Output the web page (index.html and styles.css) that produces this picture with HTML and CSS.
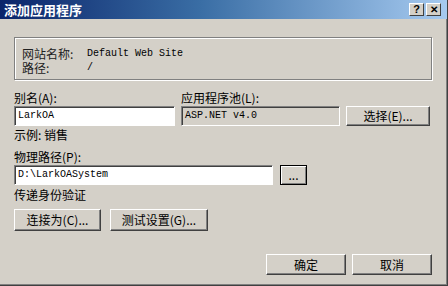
FILE: index.html
```html
<!DOCTYPE html>
<html lang="zh-CN">
<head>
    <meta charset="UTF-8">
    <title>添加应用程序</title>
    <link rel="stylesheet" href="styles.css">
</head>
<body>
    <section class="window">
        <div class="titlebar">
            <span class="title">添加应用程序</span>
            <div class="caption-buttons">
                <span class="cap-btn">?</span>
                <span class="cap-btn close">✕</span>
            </div>
        </div>

        <div class="content">
            <div class="group">
                <div class="info-row"><span class="info-label">网站名称:</span><span class="mono">Default Web Site</span></div>
                <div class="info-row"><span class="info-label">路径:</span><span class="mono">/</span></div>
            </div>

            <div class="row-grid">
                <label class="label">别名(A):</label>
                <label class="label">应用程序池(L):</label>
                <span></span>
                <div class="field mono">LarkOA</div>
                <div class="field readonly mono">ASP.NET v4.0</div>
                <button class="btn">选择(E)...</button>
            </div>

            <div class="label hint">示例: 销售</div>

            <label class="label">物理路径(P):</label>
            <div class="path-row">
                <div class="field path mono">D:\LarkOASystem</div>
                <button class="btn browse">...</button>
            </div>

            <div class="label">传递身份验证</div>

            <div class="btn-row">
                <button class="btn wide">连接为(C)...</button>
                <button class="btn wider">测试设置(G)...</button>
            </div>

            <div class="footer">
                <button class="btn ok">确定</button>
                <button class="btn ok">取消</button>
            </div>
        </div>
    </section>
</body>
</html>
```

FILE: styles.css
```css
*{
    box-sizing: border-box;
}

body{
    margin: 0;
    background-color: #d4d0c8;
    font-family: "Noto Sans CJK SC", "Liberation Sans", sans-serif;
    font-size: 12px;
    color: #000;
}

.window{
    width: 448px;
    height: 286px;
    background-color: #d4d0c8;
    border-right: 1px solid #404040;
    border-bottom: 1px solid #404040;
    box-shadow: inset -1px -1px 0 #808080;
}

.titlebar{
    height: 19px;
    display: flex;
    align-items: center;
    justify-content: space-between;
    padding: 0 6px 0 4px;
    background: linear-gradient(to right, #0a246a, #3a6ea5 45%, #a6caf0);
}

.title{
    color: #fff;
    font-weight: bold;
    font-size: 13px;
    line-height: 19px;
}

.caption-buttons{
    display: flex;
    gap: 2px;
}

.cap-btn{
    width: 15px;
    height: 13px;
    display: flex;
    align-items: center;
    justify-content: center;
    background-color: #d4d0c8;
    border: 1px solid;
    border-color: #fff #404040 #404040 #fff;
    font-family: "Liberation Sans", sans-serif;
    font-weight: bold;
    font-size: 11px;
    line-height: 1;
}

.close{
    font-size: 10px;
}

.content{
    padding: 18px 15px 0 14px;
}

.group{
    height: 43px;
    border: 1px solid #808080;
    box-shadow: inset 1px 1px 0 #fff, 1px 1px 0 #fff;
    padding: 9px 0 0 7px;
}

.info-row{
    display: flex;
    align-items: center;
    height: 14px;
    white-space: nowrap;
}

.info-row span{
    line-height: 14px;
}

.info-label{
    width: 65px;
    flex-shrink: 0;
    color: #222;
}

.mono{
    font-family: "Liberation Mono", monospace;
    font-size: 10px;
}

.label{
    display: block;
    height: 14px;
    line-height: 14px;
}

.row-grid{
    display: grid;
    grid-template-columns: 161px 159px 84px;
    column-gap: 6px;
    row-gap: 1px;
    margin-top: 11px;
}

.field{
    height: 20px;
    line-height: 18px;
    padding-left: 3px;
    background-color: #fff;
    border: 1px solid;
    border-color: #808080 #fff #fff #808080;
    box-shadow: inset 1px 1px 0 #404040;
    white-space: nowrap;
}

.readonly{
    background-color: #d4d0c8;
}

.btn{
    height: 20px;
    padding: 0;
    background-color: #d4d0c8;
    border: 1px solid;
    border-color: #fff #404040 #404040 #fff;
    box-shadow: inset -1px -1px 0 #808080;
    font-family: "Noto Sans CJK SC", sans-serif;
    font-size: 12px;
    line-height: 16px;
    color: #000;
}

.hint{
    margin-top: 2px;
}

.hint + .label{
    margin-top: 8px;
}

.path-row{
    display: flex;
    align-items: center;
    gap: 7px;
    margin-top: 1px;
}

.path{
    width: 259px;
}

.browse{
    width: 27px;
    border-color: #000;
    box-shadow: inset 1px 1px 0 #fff, inset -1px -1px 0 #808080;
    line-height: 12px;
}

.path-row + .label{
    margin-top: 3px;
}

.btn-row{
    display: flex;
    gap: 9px;
    margin-top: 7px;
}

.btn-row .btn{
    height: 22px;
}

.wide{
    width: 87px;
}

.wider{
    width: 98px;
}

.footer{
    display: flex;
    justify-content: flex-end;
    gap: 6px;
    margin-top: 23px;
}

.ok{
    width: 80px;
    height: 21px;
}
```
